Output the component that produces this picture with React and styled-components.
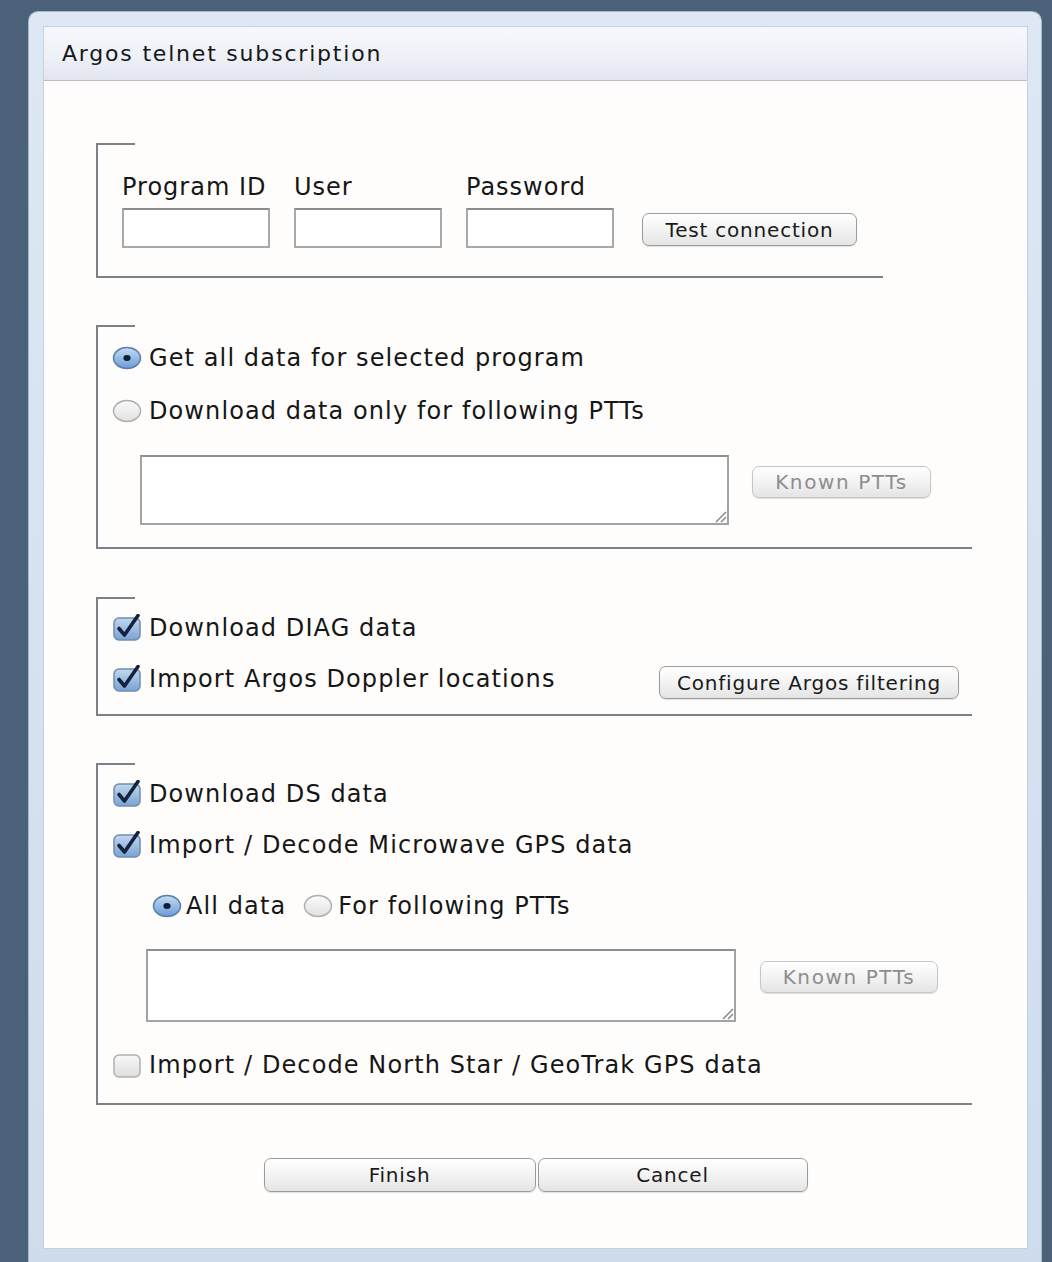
import { useId } from "react";
import styled, { createGlobalStyle } from "styled-components";

const GlobalStyle = createGlobalStyle`
    html, body {
        margin: 0;
        padding: 0;
        background: #4b6179;
    }
    body {
        font-family: "DejaVu Sans", "Liberation Sans", sans-serif;
        color: #161616;
    }
`;

function Radio({ checked }) {
    const id = useId();
    return (
        <ControlBox $w={30}>
            <svg width="30" height="24" viewBox="0 0 30 24">
                <defs>
                    <linearGradient id={id} x1="0" y1="0" x2="0" y2="1">
                        {checked ? (
                            <>
                                <stop offset="0" stopColor="#c4dcf5" />
                                <stop offset="1" stopColor="#6a9cd6" />
                            </>
                        ) : (
                            <>
                                <stop offset="0" stopColor="#fbfbfb" />
                                <stop offset="1" stopColor="#e0e0e0" />
                            </>
                        )}
                    </linearGradient>
                </defs>
                <ellipse
                    cx="15"
                    cy="12"
                    rx="13.5"
                    ry="10.5"
                    fill={`url(#${id})`}
                    stroke={checked ? "#5b7fa9" : "#b0b0b0"}
                    strokeWidth="1.5"
                />
                {checked && <ellipse cx="15" cy="12" rx="3.6" ry="3" fill="#0f1d36" />}
            </svg>
        </ControlBox>
    );
}

function Checkbox({ checked }) {
    const id = useId();
    return (
        <ControlBox $w={30}>
            <svg width="30" height="28" viewBox="0 0 30 28">
                <defs>
                    <linearGradient id={id} x1="0" y1="0" x2="0" y2="1">
                        {checked ? (
                            <>
                                <stop offset="0" stopColor="#c2d8ef" />
                                <stop offset="1" stopColor="#7aa2d2" />
                            </>
                        ) : (
                            <>
                                <stop offset="0" stopColor="#f8f8f8" />
                                <stop offset="1" stopColor="#dedede" />
                            </>
                        )}
                    </linearGradient>
                </defs>
                <rect
                    x="2"
                    y="4"
                    width="26"
                    height="22"
                    rx="5"
                    fill={`url(#${id})`}
                    stroke={checked ? "#6f8cb0" : "#b0b0b0"}
                    strokeWidth="1.5"
                />
                {checked && (
                    <path
                        d="M7 14.5 L12.5 21 L26 1.5"
                        fill="none"
                        stroke="#14233d"
                        strokeWidth="3.6"
                        strokeLinecap="round"
                        strokeLinejoin="round"
                    />
                )}
            </svg>
        </ControlBox>
    );
}

function Notes({ $ml, $w, $h }) {
    return (
        <NotesWrap $ml={$ml}>
            <NotesArea $w={$w} $h={$h} />
            <Grip width="14" height="14" viewBox="0 0 14 14">
                <path d="M13 3 L3 13 M13 8 L8 13" stroke="#8a8a8a" strokeWidth="1.5" />
            </Grip>
        </NotesWrap>
    );
}

function App() {
    return (
        <>
            <GlobalStyle />
            <Window>
                <Panel>
                    <TitleBar>Argos telnet subscription</TitleBar>

                    <Content>
                        {/* telnet account */}
                        <Group $w={787} $pt={30} $pb={28} $pl={24}>
                            <FieldRow>
                                <Field>
                                    <FieldLabel>Program ID</FieldLabel>
                                    <TextInput />
                                </Field>
                                <Field>
                                    <FieldLabel>User</FieldLabel>
                                    <TextInput />
                                </Field>
                                <Field>
                                    <FieldLabel>Password</FieldLabel>
                                    <TextInput type="password" />
                                </Field>
                                <Button $w={215} $h={33} $ml={4} $mb={2}>
                                    Test connection
                                </Button>
                            </FieldRow>
                        </Group>

                        {/* which PTTs to fetch */}
                        <Group $w={876} $pt={16} $pb={22} $pl={14} $mt={47}>
                            <Option>
                                <Radio checked />
                                <OptionText>Get all data for selected program</OptionText>
                            </Option>
                            <Option $mt={19}>
                                <Radio />
                                <OptionText>Download data only for following PTTs</OptionText>
                            </Option>
                            <NotesRow $mt={27}>
                                <Notes $ml={28} $w={589} $h={70} />
                                <Button $w={179} $h={32} $ml={23} $mt={11} disabled>
                                    Known PTTs
                                </Button>
                            </NotesRow>
                        </Group>

                        {/* DIAG */}
                        <Group $w={876} $pt={14} $pb={18} $pl={14} $mt={48}>
                            <Option>
                                <Checkbox checked />
                                <OptionText>Download DIAG data</OptionText>
                            </Option>
                            <Option $mt={17}>
                                <Checkbox checked />
                                <OptionText>Import Argos Doppler locations</OptionText>
                                <Button $w={300} $h={33} $ml="auto" $mr={13} $mt={7}>
                                    Configure Argos filtering
                                </Button>
                            </Option>
                        </Group>

                        {/* DS / GPS */}
                        <Group $w={876} $pt={14} $pb={21} $pl={14} $mt={47}>
                            <Option>
                                <Checkbox checked />
                                <OptionText>Download DS data</OptionText>
                            </Option>
                            <Option $mt={17}>
                                <Checkbox checked />
                                <OptionText>Import / Decode Microwave GPS data</OptionText>
                            </Option>
                            <Option $mt={27} $ml={40}>
                                <Radio checked />
                                <OptionText $gap={4}>All data</OptionText>
                                <Spacer />
                                <Radio />
                                <OptionText $gap={5}>For following PTTs</OptionText>
                            </Option>
                            <NotesRow $mt={26}>
                                <Notes $ml={34} $w={590} $h={73} />
                                <Button $w={178} $h={32} $ml={24} $mt={12} disabled>
                                    Known PTTs
                                </Button>
                            </NotesRow>
                            <Option $mt={26}>
                                <Checkbox />
                                <OptionText>Import / Decode North Star / GeoTrak GPS data</OptionText>
                            </Option>
                        </Group>

                        <Footer>
                            <Button $w={272} $h={34}>
                                Finish
                            </Button>
                            <Button $w={270} $h={34}>
                                Cancel
                            </Button>
                        </Footer>
                    </Content>
                </Panel>
            </Window>
        </>
    );
}

const Window = styled.div`
    box-sizing: border-box;
    height: 1251px;
    margin: 11px 10px 0 28px;
    padding: 15px 14px 14px 15px;
    display: flex;
    flex-direction: column;

    background: linear-gradient(#dde8f4, #cfdcec);
    border: 1px solid #a6b9cd;
    border-bottom: none;
    border-radius: 10px 10px 0 0;
`;

const Panel = styled.div`
    flex: 1;
    display: flex;
    flex-direction: column;
    background: #fefdfc;
    box-shadow: 0 0 0 1px #c3d2e2;
`;

const TitleBar = styled.div`
    height: 53px;
    line-height: 53px;
    padding-left: 18px;
    border-bottom: 1px solid #b8bec8;
    background: linear-gradient(#f6f8fc, #eef1f7 55%, #e2e5ee);

    font-size: 22px;
    letter-spacing: 1.8px;
    color: #161616;
`;

const Content = styled.div`
    display: flex;
    flex-direction: column;
    padding: 62px 0 0 52px;
`;

const Group = styled.div`
    position: relative;
    box-sizing: border-box;
    width: ${(p) => p.$w}px;
    margin-top: ${(p) => p.$mt || 0}px;
    padding: ${(p) => p.$pt}px 0 ${(p) => p.$pb}px ${(p) => p.$pl}px;
    display: flex;
    flex-direction: column;

    border-left: 2px solid #7c8087;
    border-bottom: 2px solid #7c8087;

    /* short top edge of the frame */
    &::before {
        content: "";
        position: absolute;
        top: 0;
        left: -2px;
        width: 39px;
        height: 2px;
        background: #7c8087;
    }
`;

const FieldRow = styled.div`
    display: flex;
    align-items: flex-end;
    gap: 24px;
`;

const Field = styled.div`
    display: flex;
    flex-direction: column;
    gap: 7px;
`;

const FieldLabel = styled.span`
    font-size: 24px;
    line-height: 28px;
    letter-spacing: 1px;
`;

const TextInput = styled.input`
    box-sizing: border-box;
    width: 148px;
    height: 40px;
    margin: 0;
    background: #fff;
    border: 2px solid #a9a9a9;
    border-top-color: #8c8c8c;
    outline: none;
`;

const Option = styled.div`
    display: flex;
    align-items: center;
    height: 34px;
    margin-top: ${(p) => p.$mt || 0}px;
    margin-left: ${(p) => p.$ml || 0}px;
`;

const ControlBox = styled.span`
    display: flex;
    align-items: center;
    justify-content: center;
    width: ${(p) => p.$w}px;
    flex-shrink: 0;
`;

const OptionText = styled.span`
    margin-left: ${(p) => (p.$gap !== undefined ? p.$gap : 7)}px;
    font-size: 24px;
    line-height: 34px;
    letter-spacing: 1.1px;
    white-space: nowrap;
`;

const Spacer = styled.span`
    width: 17px;
`;

const NotesRow = styled.div`
    display: flex;
    align-items: flex-start;
    margin-top: ${(p) => p.$mt || 0}px;
`;

const NotesWrap = styled.div`
    position: relative;
    margin-left: ${(p) => p.$ml}px;
    display: flex;
`;

const NotesArea = styled.textarea`
    box-sizing: border-box;
    width: ${(p) => p.$w}px;
    height: ${(p) => p.$h}px;
    margin: 0;
    resize: none;
    background: #fff;
    border: 2px solid #a3a3a3;
    border-top-color: #8e8e8e;
    outline: none;
`;

const Grip = styled.svg`
    position: absolute;
    right: 2px;
    bottom: 2px;
`;

const Button = styled.button`
    box-sizing: border-box;
    width: ${(p) => p.$w}px;
    height: ${(p) => p.$h}px;
    margin: ${(p) => p.$mt || 0}px ${(p) => p.$mr || 0}px ${(p) => p.$mb || 0}px
        ${(p) => (p.$ml === "auto" ? "auto" : `${p.$ml || 0}px`)};
    padding: 0;
    flex-shrink: 0;

    background: linear-gradient(#ffffff, #f3f3f3 50%, #e4e4e4);
    border: 1px solid ${(p) => (p.disabled ? "#c6c6c6" : "#9b9b9b")};
    border-radius: 7px;
    box-shadow: 0 1px 1px rgba(0, 0, 0, 0.12);

    font-family: "DejaVu Sans", "Liberation Sans", sans-serif;
    font-size: 20px;
    letter-spacing: ${(p) => (p.disabled ? "1.6px" : "0.8px")};
    color: ${(p) => (p.disabled ? "#8d8d8d" : "#1a1a1a")};
    white-space: nowrap;
`;

const Footer = styled.div`
    display: flex;
    justify-content: center;
    gap: 2px;
    margin: 53px 0 0 -52px;
`;

export default App;
